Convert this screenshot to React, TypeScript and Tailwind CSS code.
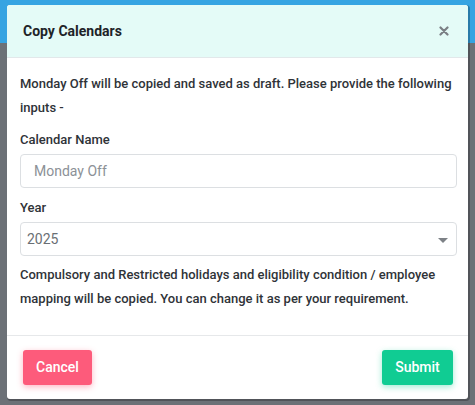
import React from 'react'

const CopyCalendarsModal = () => {
  return (
    <div className="absolute left-[7px] top-[5px] flex h-[394px] w-[461px] flex-col overflow-hidden rounded-[3px] bg-white shadow-[1px_1px_0_1px_rgba(0,0,0,0.25)]">
      <div className="flex h-[53px] items-center justify-between border-b border-[#e2e8ea] bg-[#e4fbf7] pl-4 pr-[14px]">
        <h2 className="text-[14px] font-bold text-[#1e2328]">Copy Calendars</h2>
        <button className="flex h-5 w-5 items-center justify-center text-[#7a7f84]">
          <svg width="10" height="10" viewBox="0 0 10 10">
            <path d="M1.5 1.5 L8.5 8.5 M8.5 1.5 L1.5 8.5" stroke="currentColor" strokeWidth="2.2" strokeLinecap="round" />
          </svg>
        </button>
      </div>

      <div className="flex flex-col border-b border-[#e6e8ea] pb-6 pl-[13px] pr-[11px] pt-[14px] text-[13px] font-medium leading-6 text-[#2f3338]">
        <p>Monday Off will be copied and saved as draft. Please provide the following inputs -</p>

        <label className="mt-2">Calendar Name</label>
        <input
          className="mt-[2px] h-[34px] w-full rounded-[4px] border border-[#dcdfe2] pl-[13px] text-[14px] font-normal text-[#555] placeholder:text-[#8c9197] outline-none"
          placeholder="Monday Off"
        />

        <label className="mt-2">Year</label>
        <div className="relative mt-[2px] flex h-[34px] w-full items-center rounded-[4px] border border-[#dcdfe2] pl-[6px] text-[14px] font-normal text-[#6a6f74]">
          2025
          <span className="absolute right-[8px] top-[15px] h-0 w-0 border-x-[5px] border-t-[5px] border-x-transparent border-t-[#7d8186]" />
        </div>

        <p className="mt-[7px]">
          Compulsory and Restricted holidays and eligibility condition / employee mapping will be copied. You can
          change it as per your requirement.
        </p>
      </div>

      <div className="flex flex-1 items-center justify-between pl-4 pr-[15px]">
        <button className="h-[35px] w-[69px] rounded-[3px] bg-[#fd5b7b] text-[14px] font-medium text-white shadow-[0_2px_6px_rgba(253,91,123,0.45)]">
          Cancel
        </button>
        <button className="h-[35px] w-[71px] rounded-[3px] bg-[#10cc93] text-[14px] font-medium text-white shadow-[0_2px_6px_rgba(16,204,147,0.4)]">
          Submit
        </button>
      </div>
    </div>
  )
}

export default function App() {
  return (
    <div className="relative h-[405px] w-[475px] overflow-hidden font-['Roboto',sans-serif]">
      <div className="h-[43px] bg-[#36a4e2]" />
      <div className="h-[362px] bg-[#6c7177]" />
      <CopyCalendarsModal />
    </div>
  )
}
